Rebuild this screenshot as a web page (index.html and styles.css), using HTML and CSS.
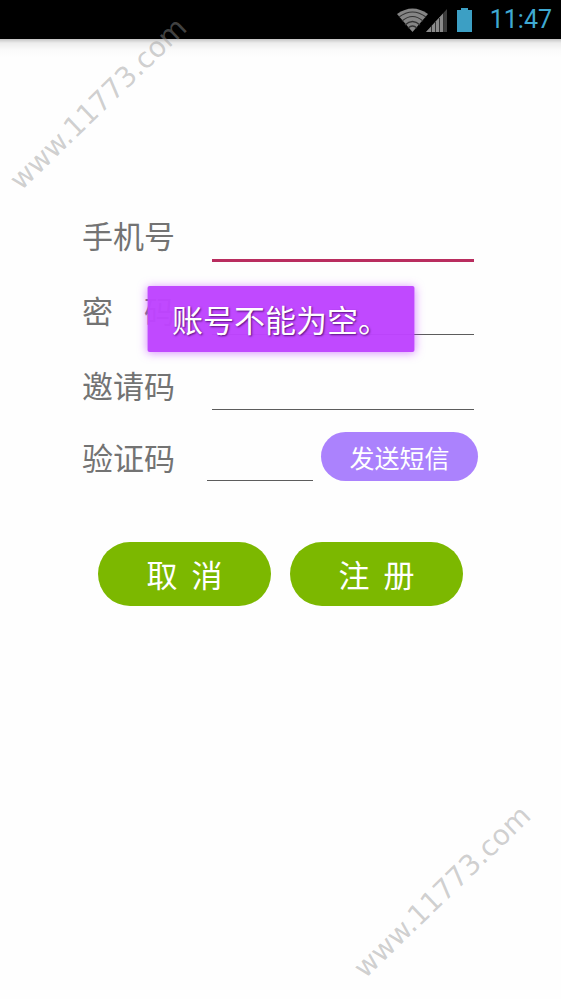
FILE: index.html
```html
<!DOCTYPE html>
<html lang="zh-CN">
<head>
<meta charset="utf-8">
<meta name="viewport" content="width=device-width, initial-scale=1">
<title>注册</title>
<link rel="stylesheet" href="styles.css">
</head>
<body>
<header class="status-bar">
  <svg class="status-icons" width="78" height="28" viewBox="0 0 78 28" aria-hidden="true">
    <path d="M0 8Q15.500 -3 31 8L15.500 26Z" fill="#858585"/>
    <g fill="none" stroke="#333" stroke-width="1.200">
      <path d="M2 11Q15.500 1 29 11"/>
      <path d="M5 15Q15.500 6 26 15"/>
      <path d="M8 19Q15.500 12 23 19"/>
      <path d="M11 22Q15.500 18 20 22"/>
    </g>
    <path d="M29 26L50 3V26Z" fill="#3c3c3c"/>
    <path d="M29 26L46 7.400V26Z" fill="#8a8a8a"/>
    <path d="M34.500 20V26M38.500 16V26M42.500 12V26M46.500 7V26" stroke="#333" stroke-width="1"/>
    <path d="M64 2H71V4H75V26H60V4H64Z" fill="#3c9fc4"/>
  </svg>
  <time class="clock">11:47</time>
</header>
<main class="screen">
  <form class="form">
    <div class="row">
      <label class="label" for="phone">手机号</label>
      <input class="field field-active" id="phone" type="tel">
    </div>
    <div class="row">
      <label class="label" for="password">密　码</label>
      <input class="field" id="password" type="password">
    </div>
    <div class="row">
      <label class="label" for="invite">邀请码</label>
      <input class="field" id="invite" type="text">
    </div>
    <div class="row row-code">
      <label class="label" for="code">验证码</label>
      <input class="field" id="code" type="text">
      <button class="send" type="button">发送短信</button>
    </div>
    <div class="actions">
      <button class="action" type="button">取  消</button>
      <button class="action" type="button">注  册</button>
    </div>
  </form>
</main>
<div class="toast" role="alert">账号不能为空。</div>
<div class="watermark watermark-top">www.11773.com</div>
<div class="watermark watermark-bottom">www.11773.com</div>
</body>
</html>
```
FILE: styles.css
```css
* {
  box-sizing: border-box;
}

body {
  margin: 0;
  min-height: 100vh;
  position: relative;
  overflow-x: hidden;
  display: flex;
  flex-direction: column;
  background: #fefefe;
  color: #737373;
  font: 31px/44px "Noto Sans CJK SC", sans-serif;
}

button,
input {
  margin: 0;
  padding: 0;
  border: 0;
  font: inherit;
}

.status-bar {
  height: 39px;
  padding: 0 9px;
  display: flex;
  align-items: center;
  justify-content: flex-end;
  gap: 15px;
  background: #000;
}

.clock {
  color: #3fa9d2;
  font: 25px/40px Roboto, sans-serif;
}

.screen {
  flex: 1;
  padding: 174px 83px 40px 82px;
  background: linear-gradient(#c4c4c4, #ececec 4px, #fafafa 11px, #fefefe 18px) no-repeat;
}

.row {
  height: 49px;
  margin-bottom: 26px;
  display: flex;
  align-items: flex-start;
}

.label {
  flex: none;
  width: 130px;
}

.field {
  flex: 1;
  min-width: 0;
  height: 47px;
  margin-right: 4px;
  border-bottom: 1px solid #5c5c5c;
  border-radius: 0;
  background: transparent;
  color: #333;
  outline: none;
}

.field-active {
  height: 49px;
  border-bottom: 3px solid #b92d5f;
}

.row-code {
  margin-top: -6px;
  margin-bottom: 0;
  align-items: flex-end;
}

.row-code .label {
  width: 125px;
  align-self: center;
}

.row-code .field {
  margin-right: 8px;
}

.send {
  flex: none;
  width: 157px;
  height: 49px;
  border-radius: 25px;
  background: #ab82fd;
  color: #fff;
  font-size: 25px;
}

.actions {
  margin-top: 61px;
  padding: 0 15px 0 16px;
  display: flex;
  gap: 19px;
}

.action {
  flex: 1;
  height: 64px;
  border-radius: 32px;
  background: #7cb800;
  color: #fff;
  white-space: pre;
}

.toast {
  position: absolute;
  top: 286px;
  left: 50%;
  transform: translateX(-50%);
  padding: 11px 25px;
  border-radius: 2px;
  background: rgba(190, 67, 255, 0.97);
  box-shadow: 0 1px 10px rgba(190, 67, 255, 0.6);
  color: #fff;
  text-shadow: 1px 1px 2px rgba(60, 0, 90, 0.8);
  white-space: nowrap;
}

.watermark {
  position: absolute;
  color: rgba(150, 150, 150, 0.45);
  font: 28px/36px "DejaVu Sans", sans-serif;
  white-space: nowrap;
  transform: rotate(-44deg);
  pointer-events: none;
}

.watermark-top {
  top: 86px;
  left: -18px;
}

.watermark-bottom {
  right: 2px;
  bottom: 89px;
}
```
